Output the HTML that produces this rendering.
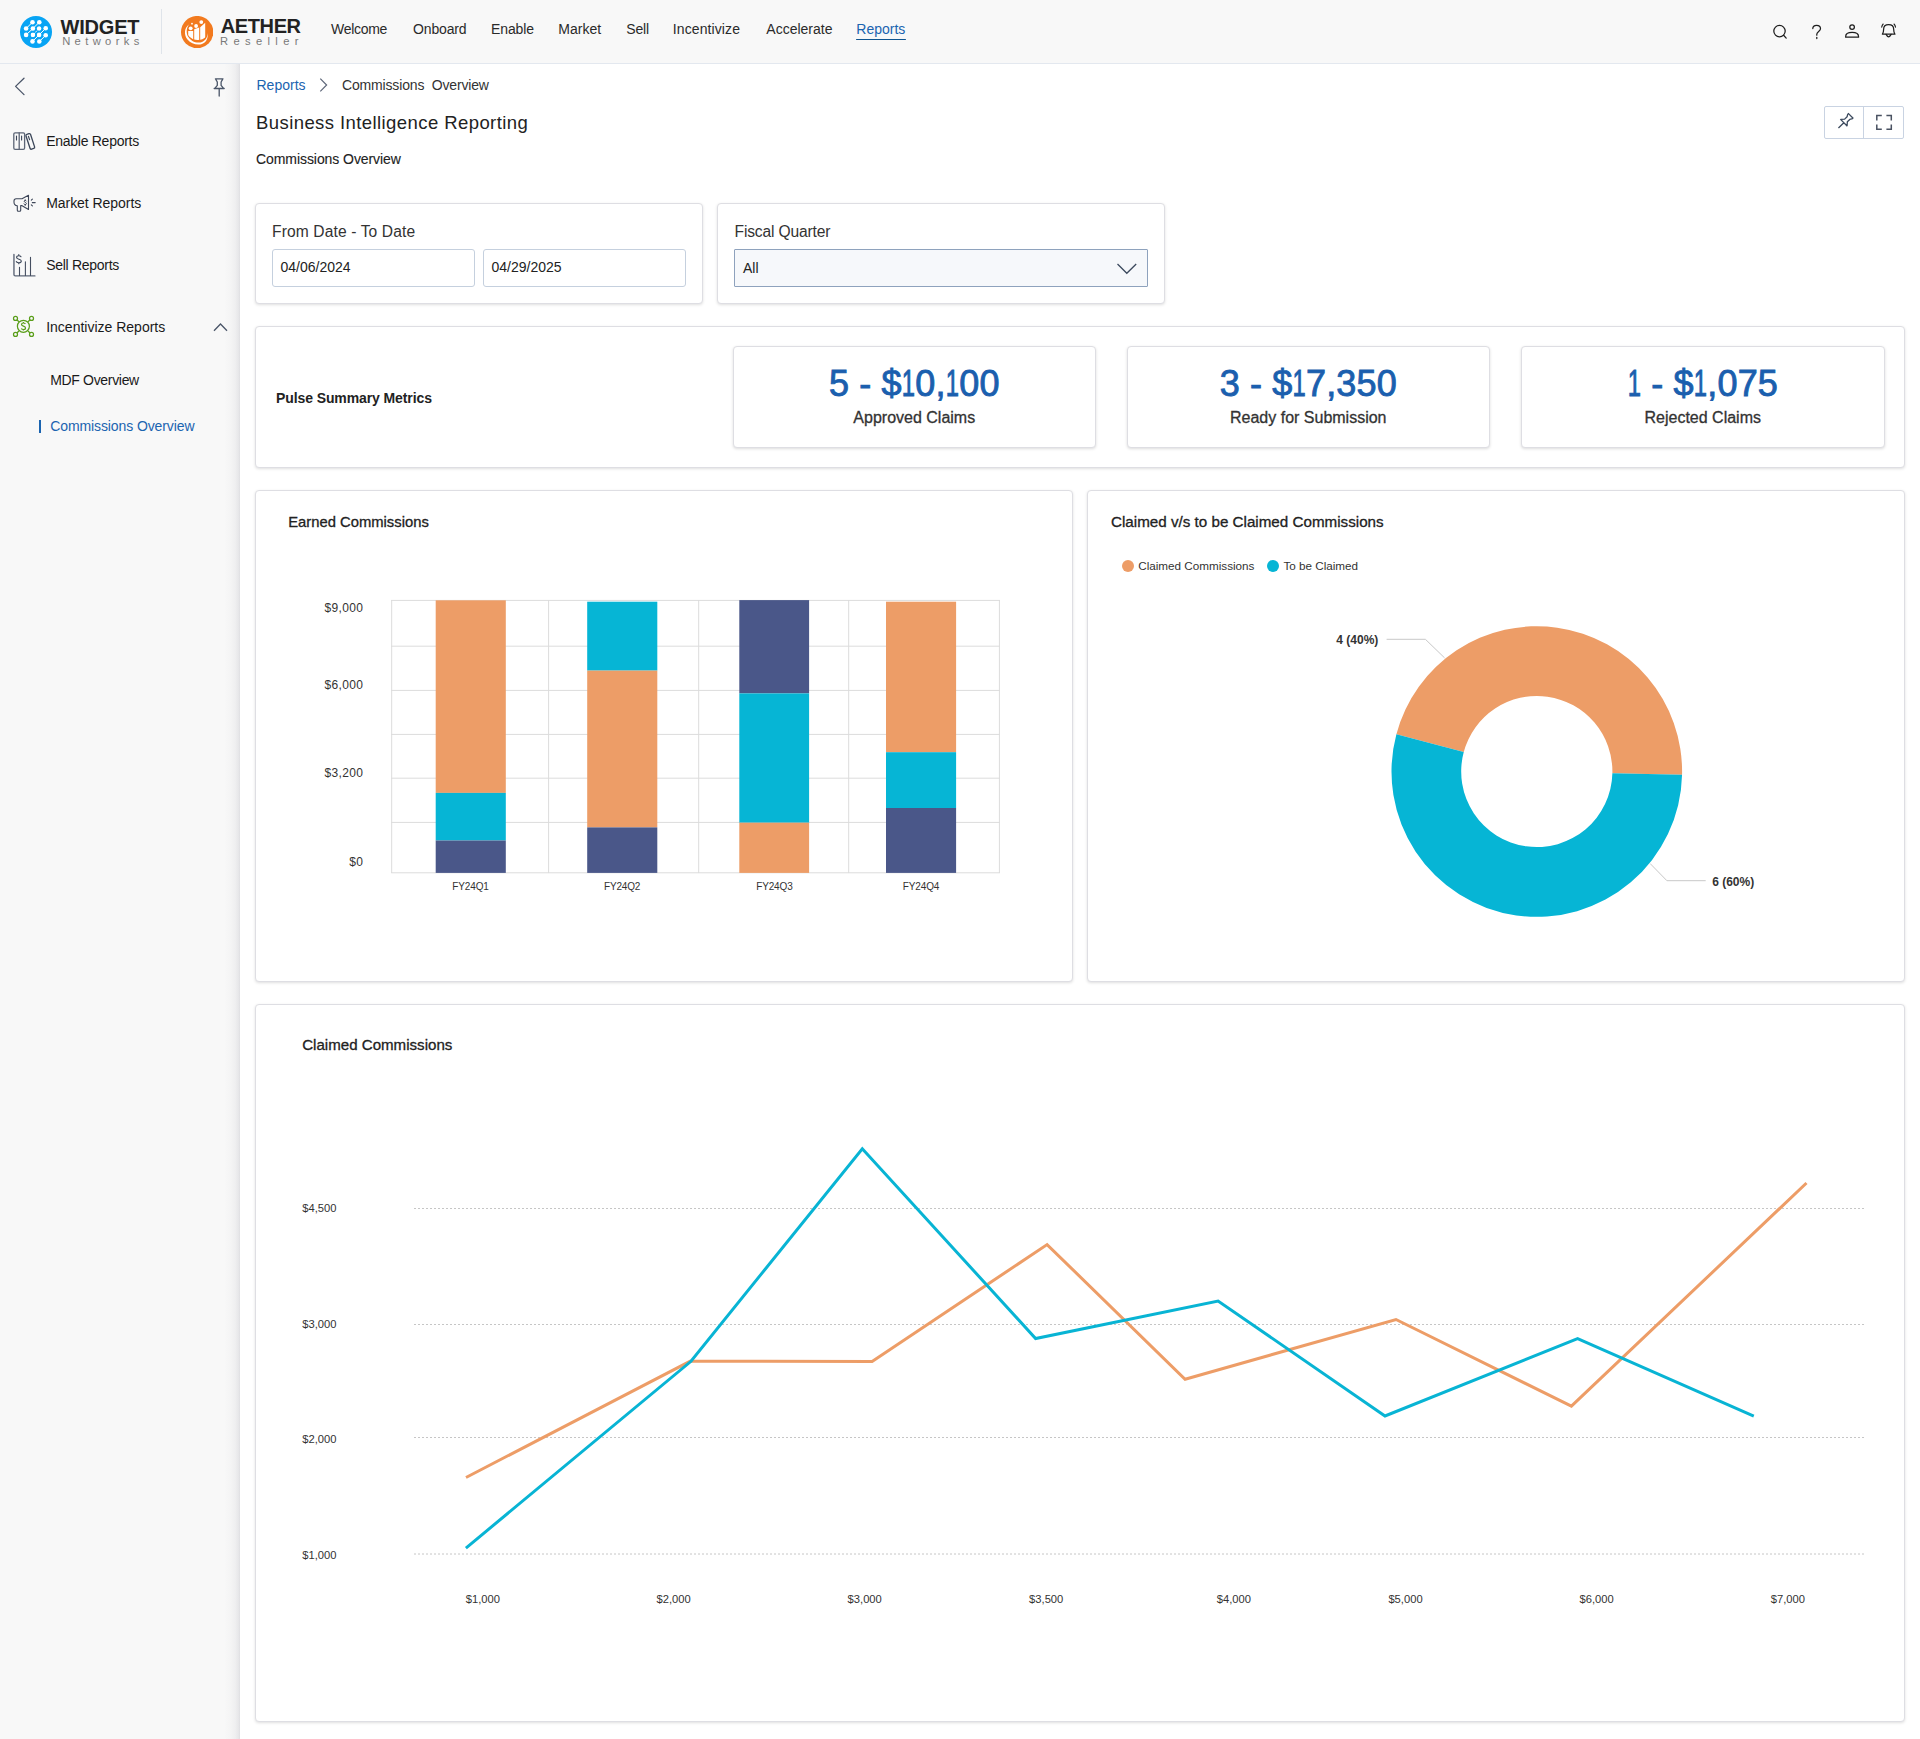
<!DOCTYPE html>
<html><head><meta charset="utf-8"><title>Commissions Overview</title>
<style>
html,body{margin:0;padding:0;}
body{width:1920px;height:1739px;position:relative;overflow:hidden;background:#fff;font-family:"Liberation Sans", sans-serif;}
.t{position:absolute;white-space:nowrap;}
.n1{display:inline-block;width:13.6px;transform:scaleX(0.66);transform-origin:0 0;}
</style></head><body>
<div style="position:absolute;left:0px;top:0px;width:1920px;height:63px;background:#f8f8f8;"></div>
<div style="position:absolute;left:0px;top:63px;width:1920px;height:1px;background:#e3e8ef;"></div>
<svg style="position:absolute;left:20px;top:16px" width="32" height="32" viewBox="0 0 32 32">
<circle cx="16" cy="16" r="16" fill="#08a4f4"/>
<g fill="#fff">
<circle cx="12.5" cy="6.2" r="2.3"/><circle cx="19.3" cy="6.2" r="2.3"/>
<circle cx="6.1" cy="12.5" r="2.3"/><circle cx="12.9" cy="12.5" r="2.3"/><circle cx="19.1" cy="12.5" r="2.3"/><circle cx="25.7" cy="12.3" r="2.3"/>
<circle cx="6.1" cy="18.9" r="2.3"/><circle cx="12.9" cy="18.9" r="2.3"/><circle cx="19.1" cy="18.9" r="2.3"/><circle cx="25.7" cy="19.3" r="2.3"/>
<circle cx="12.5" cy="25.4" r="2.3"/><circle cx="19.3" cy="25.5" r="2.3"/>
</g>
<g stroke="#fff" stroke-width="1" fill="none">
<path d="M6.1 12.5 L12.5 6.2 M12.9 12.5 L19.3 6.2 M6.1 18.9 L12.9 12.5 M12.9 18.9 L19.1 12.5 M19.1 18.9 L25.7 12.3 M12.5 25.4 L19.1 18.9 M19.3 25.5 L25.7 19.3"/>
</g>
<g stroke="#08a4f4" stroke-width="0.9" fill="none">
<circle cx="12.9" cy="18.9" r="3.1"/><circle cx="19.1" cy="12.5" r="3.1"/>
</g>
</svg>
<div class="t" style="left:60.5px;top:17.00px;font-size:20px;line-height:20px;font-weight:700;color:#222;letter-spacing:-0.2px;">WIDGET</div>
<div class="t" style="left:62.2px;top:36.00px;font-size:11.2px;line-height:11.2px;font-weight:400;color:#7a7a7a;letter-spacing:4.35px;">Networks</div>
<div style="position:absolute;left:160.5px;top:9px;width:1px;height:45px;background:#dfe4ea;"></div>
<svg style="position:absolute;left:180.7px;top:16px" width="32.3" height="32.3" viewBox="0 0 32.3 32.3">
<defs><clipPath id="bc"><circle cx="16.8" cy="12" r="12"/></clipPath></defs>
<circle cx="16.15" cy="16.1" r="16.15" fill="#f27a1f"/>
<g fill="#fff">
<path d="M8.3 8.2 C3 11.5 2.8 19 6.5 23.5 C10 28 16.5 29.5 21 28 C25 26.6 27 23 26.9 17 C26.3 22 24 25.5 19.5 26.4 C14.5 27.3 9.5 24.8 7 20.5 C5 17 5.3 11.3 8.3 8.2 Z"/>
<g clip-path="url(#bc)">
<path d="M7.2 15 L12.2 15 L12.2 26 L7.2 26 Z"/>
<path d="M13.2 13.3 L18.2 11.5 L18.2 26 L13.2 26 Z"/>
<path d="M19.2 11.2 L24.2 6.7 L24.2 26 L19.2 26 Z"/>
</g>
<circle cx="9.7" cy="12.3" r="1.9"/><circle cx="15.1" cy="10" r="1.9"/><circle cx="20.3" cy="6.1" r="1.9"/><circle cx="11" cy="7.7" r="0.9"/>
</g></svg>
<div class="t" style="left:220.8px;top:16.00px;font-size:20px;line-height:20px;font-weight:700;color:#222;letter-spacing:-0.4px;">AETHER</div>
<div class="t" style="left:220px;top:36.00px;font-size:11.2px;line-height:11.2px;font-weight:400;color:#7a7a7a;letter-spacing:5.35px;">Reseller</div>
<div class="t" style="left:331px;top:22.00px;font-size:14px;line-height:14px;font-weight:400;color:#2a2a2a;letter-spacing:-0.3px;">Welcome</div>
<div class="t" style="left:413px;top:22.00px;font-size:14px;line-height:14px;font-weight:400;color:#2a2a2a;letter-spacing:-0.15px;">Onboard</div>
<div class="t" style="left:491px;top:22.00px;font-size:14px;line-height:14px;font-weight:400;color:#2a2a2a;letter-spacing:-0.1px;">Enable</div>
<div class="t" style="left:558.3px;top:22.00px;font-size:14px;line-height:14px;font-weight:400;color:#2a2a2a;">Market</div>
<div class="t" style="left:626.3px;top:22.00px;font-size:14px;line-height:14px;font-weight:400;color:#2a2a2a;letter-spacing:-0.15px;">Sell</div>
<div class="t" style="left:672.8px;top:22.00px;font-size:14px;line-height:14px;font-weight:400;color:#2a2a2a;letter-spacing:0.1px;">Incentivize</div>
<div class="t" style="left:766.3px;top:22.00px;font-size:14px;line-height:14px;font-weight:400;color:#2a2a2a;">Accelerate</div>
<div class="t" style="left:856.3px;top:22.00px;font-size:14px;line-height:14px;font-weight:400;color:#1b64b0;">Reports</div>
<div style="position:absolute;left:856.3px;top:38.6px;width:49.5px;height:1.6px;background:#0f548f;border-radius:1px;"></div>
<svg style="position:absolute;left:1766px;top:18px" width="140" height="28" viewBox="1766 18 140 28" fill="none" stroke="#1e1e1e" stroke-width="1.25" stroke-linecap="round">
<circle cx="1779.5" cy="31.1" r="5.7"/><path d="M1783.6 35.3 L1786.2 38.1"/>
<path d="M1812.8 28.6 C1812.8 26.3 1814.6 25.3 1816.6 25.3 C1818.8 25.3 1820.5 26.6 1820.5 28.7 C1820.5 31.3 1816.8 31.6 1816.8 34.2 L1816.8 35.2"/><path d="M1816.8 37.4 L1816.8 38.6"/>
<circle cx="1852.1" cy="27.1" r="2.3"/><path d="M1845.7 37.2 L1858.5 37.2 L1858.5 36.3 C1858.5 33.8 1855.8 32.3 1852.1 32.3 C1848.4 32.3 1845.7 33.8 1845.7 36.3 Z"/>
<path stroke-linejoin="round" d="M1882.4 34.2 L1894.9 34.2 C1894 33 1893.7 31.5 1893.7 29.5 C1893.7 26.6 1891.6 24.7 1888.6 24.7 C1885.6 24.7 1883.6 26.6 1883.6 29.5 C1883.6 31.5 1883.3 33 1882.4 34.2 Z"/>
<path d="M1886.1 34.4 Q1888.6 39.2 1891.1 34.4"/>
<path d="M1881.7 27.2 C1881.9 25.8 1882.4 24.7 1883.2 24" stroke-width="1.1"/><path d="M1895.5 27.2 C1895.3 25.8 1894.8 24.7 1894 24" stroke-width="1.1"/>
</svg>
<div style="position:absolute;left:0px;top:64px;width:240px;height:1675px;background:#f8f8f8;"></div>
<div style="position:absolute;left:224px;top:64px;width:16px;height:1675px;background:linear-gradient(to right, rgba(20,20,50,0) 0%, rgba(20,20,50,0.015) 40%, rgba(20,20,50,0.04) 70%, rgba(20,20,50,0.075) 90%, rgba(20,20,50,0.11) 100%);"></div>
<svg style="position:absolute;left:0;top:64px" width="240" height="400" viewBox="0 64 240 400" fill="none" stroke="#4a5568" stroke-width="1.3" stroke-linecap="round" stroke-linejoin="round">
<path d="M24 78.3 L15.6 86.4 L24 94.6"/>
<path transform="translate(219.2 87.4)" d="M-3.8 -8.6 L3.8 -8.6 M-3.4 -8 L-1.9 -5.4 L-1.9 -2 L-4.4 0.9 M3.4 -8 L1.9 -5.4 L1.9 -2 L4.4 0.9 M-5 1.1 L5 1.1 M0 1.1 L0 8.7"/>
<g stroke="#5d6677" stroke-width="1.3">
<rect x="13.8" y="132.8" width="10.8" height="16.6" rx="1.3"/><path d="M19.2 132.8 L19.2 149.4"/>
<path d="M16.5 136 L16.5 140 M21.6 136 L21.6 140" stroke="#3a4558" stroke-width="1.1"/>
<rect transform="translate(30.3 141.4) rotate(-18)" x="-2.4" y="-7.8" width="4.8" height="15.6" rx="1.3" stroke="#3a4558"/>
<path d="M28.4 136.3 L29.6 139.8" stroke="#3a4558" stroke-width="1.1"/>
</g>
<g stroke="#3d4658" stroke-width="1.1">
<path d="M28.5 195.3 L28.5 209.5 L21.7 205.5 L20.7 205.6 L20.7 210.3 Q20.7 211.3 19.7 211.3 L18.3 211.3 Q17.3 211.3 17.3 210.3 L17.3 205.8 Q14 205.2 14 202.2 L14 201 Q14 198.8 16.2 198.8 L22 198.8 Z"/>
<path d="M31.3 200.2 L32.4 199.2 M32.3 202.6 L35.2 202.6 M31.3 204.8 L32.4 205.9"/>
<path d="M26.3 201 C26 200.6 25.7 200.4 25.2 200.4 C24.6 200.4 24.2 200.8 24.2 201.3 C24.2 202.4 26.4 202.2 26.4 203.6 C26.4 204.2 25.9 204.6 25.2 204.6 C24.6 204.6 24.2 204.3 24 203.9 M25.2 199.8 L25.2 200.4 M25.2 204.6 L25.2 205.4" stroke-width="1"/>
</g>
<g stroke="#5d6677">
<path d="M13.95 254.5 L13.95 274.5 Q13.95 275.9 15.3 275.9 L34.9 275.9" stroke-width="1.4"/>
<path d="M19.5 267.2 L19.5 275.5 M25.4 261.7 L25.4 275.5 M30.5 257.2 L30.5 275.5" stroke="#454e60" stroke-width="1.1"/>
<path d="M21 256.7 C20.6 256 20 255.7 18.8 255.7 C17.6 255.7 16.6 256.3 16.6 257.4 C16.6 259.6 21.3 258.8 21.3 261 C21.3 262.1 20.3 262.8 18.8 262.8 C17.6 262.8 16.8 262.3 16.3 261.6 M18.8 254.6 L18.8 255.7 M18.8 262.8 L18.8 263.8" stroke="#3a4558" stroke-width="1.1"/>
</g>
</svg>
<svg style="position:absolute;left:0;top:300px" width="60" height="50" viewBox="0 300 60 50" fill="none" stroke="#5a9e1a" stroke-width="1.25">
<circle cx="23.4" cy="326.3" r="6.0"/>
<circle cx="15.5" cy="318.4" r="2"/><circle cx="31.5" cy="318.4" r="2"/><circle cx="15.5" cy="334.4" r="2"/><circle cx="31.5" cy="334.4" r="2"/>
<path d="M16.9 319.8 L18.9 321.8 M30.1 319.8 L28 321.8 M16.9 333 L18.9 331 M30.1 333 L28 331"/>
<path d="M25.4 323.9 C25 323.3 24.3 323 23.4 323 C22.3 323 21.5 323.6 21.5 324.5 C21.5 326.5 25.5 325.7 25.5 327.9 C25.5 328.9 24.6 329.5 23.4 329.5 C22.3 329.5 21.6 329.1 21.3 328.5 M23.4 322 L23.4 323 M23.4 329.5 L23.4 330.6" stroke-width="1.2"/>
</svg>
<div class="t" style="left:46.2px;top:134.00px;font-size:14px;line-height:14px;font-weight:400;color:#1a1a1a;letter-spacing:-0.27px;">Enable Reports</div>
<div class="t" style="left:46.2px;top:196.00px;font-size:14px;line-height:14px;font-weight:400;color:#1a1a1a;letter-spacing:-0.05px;">Market Reports</div>
<div class="t" style="left:46.2px;top:258.00px;font-size:14px;line-height:14px;font-weight:400;color:#1a1a1a;letter-spacing:-0.28px;">Sell Reports</div>
<div class="t" style="left:46.2px;top:320.00px;font-size:14px;line-height:14px;font-weight:400;color:#1a1a1a;">Incentivize Reports</div>
<svg style="position:absolute;left:210px;top:318px" width="20" height="16" viewBox="210 318 20 16" fill="none" stroke="#4a5568" stroke-width="1.3"><path d="M214 330.8 L220.5 324 L227 330.8"/></svg>
<div class="t" style="left:50.2px;top:373.00px;font-size:14px;line-height:14px;font-weight:400;color:#1a1a1a;letter-spacing:-0.32px;">MDF Overview</div>
<div style="position:absolute;left:39px;top:420px;width:2.2px;height:13px;background:#1b64b0;"></div>
<div class="t" style="left:50.2px;top:419.00px;font-size:14px;line-height:14px;font-weight:400;color:#1b64b0;letter-spacing:-0.1px;">Commissions Overview</div>
<div class="t" style="left:256.5px;top:78.00px;font-size:14px;line-height:14px;font-weight:400;color:#1b64b0;">Reports</div>
<svg style="position:absolute;left:315px;top:74px" width="16" height="20" viewBox="315 74 16 20" fill="none" stroke="#5d6678" stroke-width="1.2"><path d="M320.3 78.7 L326.6 85 L320.3 91.3"/></svg>
<div class="t" style="left:342px;top:78.00px;font-size:14px;line-height:14px;font-weight:400;color:#333;letter-spacing:-0.16px;">Commissions&nbsp; Overview</div>
<div class="t" style="left:256px;top:114.00px;font-size:18.5px;line-height:18.5px;font-weight:400;color:#222;letter-spacing:0.42px;">Business Intelligence Reporting</div>
<div class="t" style="left:256px;top:152.00px;font-size:14px;line-height:14px;font-weight:400;color:#222;letter-spacing:-0.07px;-webkit-text-stroke:0.12px #222;">Commissions Overview</div>
<div style="position:absolute;left:1824px;top:106px;width:79.5px;height:32.5px;border:1px solid #c9d3e2;box-sizing:border-box;border-radius:2px;background:#fff;"></div>
<div style="position:absolute;left:1863px;top:106px;width:1px;height:32.5px;background:#c9d3e2;"></div>
<svg style="position:absolute;left:1830px;top:108px" width="70" height="28" viewBox="1830 108 70 28" fill="none" stroke="#3c4a5e" stroke-width="1.2">
<path stroke-width="1.3" stroke-linejoin="round" transform="translate(1844.6 121.9) rotate(45)" d="M-3.8 -8.6 L3.8 -8.6 M-3.4 -8 L-1.9 -5.4 L-1.9 -2 L-4.4 0.9 M3.4 -8 L1.9 -5.4 L1.9 -2 L4.4 0.9 M-5 1.1 L5 1.1 M0 1.1 L0 8.7"/>
<path stroke="#4a5262" stroke-width="1.5" d="M1876.8 120.4 L1876.8 115.5 L1881.8 115.5 M1886.4 115.5 L1891.3 115.5 L1891.3 120.4 M1891.3 124.4 L1891.3 129.3 L1886.4 129.3 M1881.8 129.3 L1876.8 129.3 L1876.8 124.4"/>
</svg>
<div style="position:absolute;left:255px;top:203px;width:448px;height:101px;background:#fff;border:1px solid #dedee3;border-radius:4px;box-sizing:border-box;box-shadow:0 1px 3px rgba(0,0,0,0.13);"></div>
<div class="t" style="left:272px;top:224.00px;font-size:15.6px;line-height:15.6px;font-weight:400;color:#333;letter-spacing:0.12px;">From Date - To Date</div>
<div style="position:absolute;left:272px;top:249px;width:202.5px;height:37.5px;border:1px solid #c5d0de;border-radius:3px;box-sizing:border-box;background:#fff;"></div>
<div style="position:absolute;left:483px;top:249px;width:202.5px;height:37.5px;border:1px solid #c5d0de;border-radius:3px;box-sizing:border-box;background:#fff;"></div>
<div class="t" style="left:280.5px;top:260.00px;font-size:14px;line-height:14px;font-weight:400;color:#222;">04/06/2024</div>
<div class="t" style="left:491.5px;top:260.00px;font-size:14px;line-height:14px;font-weight:400;color:#222;">04/29/2025</div>
<div style="position:absolute;left:717px;top:203px;width:448px;height:101px;background:#fff;border:1px solid #dedee3;border-radius:4px;box-sizing:border-box;box-shadow:0 1px 3px rgba(0,0,0,0.13);"></div>
<div class="t" style="left:734.5px;top:224.00px;font-size:15.6px;line-height:15.6px;font-weight:400;color:#333;letter-spacing:-0.15px;">Fiscal Quarter</div>
<div style="position:absolute;left:734px;top:249px;width:414px;height:37.5px;border:1px solid #8ea2bd;box-sizing:border-box;background:#f6f8fb;border-radius:1px;"></div>
<div class="t" style="left:743px;top:261.00px;font-size:14px;line-height:14px;font-weight:400;color:#222;">All</div>
<svg style="position:absolute;left:1112px;top:258px" width="30" height="20" viewBox="1112 258 30 20" fill="none" stroke="#3c4a5e" stroke-width="1.3"><path d="M1117.5 264 L1126.8 273.3 L1136.2 264"/></svg>
<div style="position:absolute;left:255px;top:326px;width:1650px;height:142px;background:#fff;border:1px solid #dedee3;border-radius:4px;box-sizing:border-box;box-shadow:0 1px 3px rgba(0,0,0,0.13);"></div>
<div class="t" style="left:276px;top:391.00px;font-size:14px;line-height:14px;font-weight:700;color:#222;letter-spacing:-0.1px;">Pulse Summary Metrics</div>
<div style="position:absolute;left:733px;top:346px;width:362.5px;height:101.5px;background:#fff;border:1px solid #dedee3;border-radius:4px;box-sizing:border-box;box-shadow:0 1px 3px rgba(0,0,0,0.14);"></div>
<div class="t" style="left:914.25px;top:366.00px;font-size:36px;line-height:36px;font-weight:400;color:#1b5fae;letter-spacing:0.15px;transform:translateX(-50%);-webkit-text-stroke:0.9px #1b5fae;">5 - $<span class="n1">1</span>0,<span class="n1">1</span>00</div>
<div class="t" style="left:914.25px;top:410.00px;font-size:16px;line-height:16px;font-weight:400;color:#333;transform:translateX(-50%);-webkit-text-stroke:0.3px #333;">Approved Claims</div>
<div style="position:absolute;left:1126.5px;top:346px;width:363.5px;height:101.5px;background:#fff;border:1px solid #dedee3;border-radius:4px;box-sizing:border-box;box-shadow:0 1px 3px rgba(0,0,0,0.14);"></div>
<div class="t" style="left:1308.25px;top:366.00px;font-size:36px;line-height:36px;font-weight:400;color:#1b5fae;letter-spacing:0.15px;transform:translateX(-50%);-webkit-text-stroke:0.9px #1b5fae;">3 - $<span class="n1">1</span>7,350</div>
<div class="t" style="left:1308.25px;top:410.00px;font-size:16px;line-height:16px;font-weight:400;color:#333;transform:translateX(-50%);-webkit-text-stroke:0.3px #333;">Ready for Submission</div>
<div style="position:absolute;left:1520.8px;top:346px;width:363.9000000000001px;height:101.5px;background:#fff;border:1px solid #dedee3;border-radius:4px;box-sizing:border-box;box-shadow:0 1px 3px rgba(0,0,0,0.14);"></div>
<div class="t" style="left:1702.75px;top:366.00px;font-size:36px;line-height:36px;font-weight:400;color:#1b5fae;letter-spacing:0.15px;transform:translateX(-50%);-webkit-text-stroke:0.9px #1b5fae;"><span class="n1">1</span> - $<span class="n1">1</span>,075</div>
<div class="t" style="left:1702.75px;top:410.00px;font-size:16px;line-height:16px;font-weight:400;color:#333;transform:translateX(-50%);-webkit-text-stroke:0.3px #333;">Rejected Claims</div>
<div style="position:absolute;left:255px;top:490px;width:818px;height:492px;background:#fff;border:1px solid #dedee3;border-radius:4px;box-sizing:border-box;box-shadow:0 1px 3px rgba(0,0,0,0.13);"></div>
<div class="t" style="left:288.2px;top:515.00px;font-size:14.8px;line-height:14.8px;font-weight:400;color:#222;-webkit-text-stroke:0.3px #222;">Earned Commissions</div>
<svg style="position:absolute;left:0;top:0" width="1920" height="1739" viewBox="0 0 1920 1739"><line x1="391.2" y1="600.4" x2="999.9" y2="600.4" stroke="#dcdcdc" stroke-width="1"/><line x1="391.2" y1="646.2" x2="999.9" y2="646.2" stroke="#dcdcdc" stroke-width="1"/><line x1="391.2" y1="690.4" x2="999.9" y2="690.4" stroke="#dcdcdc" stroke-width="1"/><line x1="391.2" y1="734.4" x2="999.9" y2="734.4" stroke="#dcdcdc" stroke-width="1"/><line x1="391.2" y1="778.2" x2="999.9" y2="778.2" stroke="#dcdcdc" stroke-width="1"/><line x1="391.2" y1="822.4" x2="999.9" y2="822.4" stroke="#dcdcdc" stroke-width="1"/><line x1="391.2" y1="872.8" x2="999.9" y2="872.8" stroke="#dcdcdc" stroke-width="1"/><line x1="391.7" y1="600" x2="391.7" y2="873" stroke="#dcdcdc" stroke-width="1"/><line x1="548.6" y1="600" x2="548.6" y2="873" stroke="#dcdcdc" stroke-width="1"/><line x1="698.7" y1="600" x2="698.7" y2="873" stroke="#dcdcdc" stroke-width="1"/><line x1="848.7" y1="600" x2="848.7" y2="873" stroke="#dcdcdc" stroke-width="1"/><line x1="999.4" y1="600" x2="999.4" y2="873" stroke="#dcdcdc" stroke-width="1"/><rect x="435.7" y="600.3" width="70.10000000000002" height="192.60000000000002" fill="#ed9d67"/><rect x="435.7" y="792.9" width="70.10000000000002" height="47.60000000000002" fill="#06b5d5"/><rect x="435.7" y="840.5" width="70.10000000000002" height="32.39999999999998" fill="#4a5789"/><rect x="587.2" y="601.7" width="70.09999999999991" height="68.89999999999998" fill="#06b5d5"/><rect x="587.2" y="670.6" width="70.09999999999991" height="156.79999999999995" fill="#ed9d67"/><rect x="587.2" y="827.4" width="70.09999999999991" height="45.5" fill="#4a5789"/><rect x="739.3" y="600.1" width="69.80000000000007" height="93.29999999999995" fill="#4a5789"/><rect x="739.3" y="693.4" width="69.80000000000007" height="129.30000000000007" fill="#06b5d5"/><rect x="739.3" y="822.7" width="69.80000000000007" height="50.19999999999993" fill="#ed9d67"/><rect x="886" y="601.7" width="70.10000000000002" height="150.5" fill="#ed9d67"/><rect x="886" y="752.2" width="70.10000000000002" height="55.799999999999955" fill="#06b5d5"/><rect x="886" y="808" width="70.10000000000002" height="64.89999999999998" fill="#4a5789"/></svg>
<div class="t" style="left:363.3px;top:602.00px;font-size:12px;line-height:12px;font-weight:400;color:#333;letter-spacing:0.35px;transform:translateX(-100%);">$9,000</div>
<div class="t" style="left:363.3px;top:679.00px;font-size:12px;line-height:12px;font-weight:400;color:#333;letter-spacing:0.35px;transform:translateX(-100%);">$6,000</div>
<div class="t" style="left:363.3px;top:767.00px;font-size:12px;line-height:12px;font-weight:400;color:#333;letter-spacing:0.35px;transform:translateX(-100%);">$3,200</div>
<div class="t" style="left:363.3px;top:856.00px;font-size:12px;line-height:12px;font-weight:400;color:#333;letter-spacing:0.35px;transform:translateX(-100%);">$0</div>
<div class="t" style="left:470.5px;top:882.00px;font-size:10px;line-height:10px;font-weight:400;color:#333;letter-spacing:-0.15px;transform:translateX(-50%);">FY24Q1</div>
<div class="t" style="left:622.1px;top:882.00px;font-size:10px;line-height:10px;font-weight:400;color:#333;letter-spacing:-0.15px;transform:translateX(-50%);">FY24Q2</div>
<div class="t" style="left:774.4px;top:882.00px;font-size:10px;line-height:10px;font-weight:400;color:#333;letter-spacing:-0.15px;transform:translateX(-50%);">FY24Q3</div>
<div class="t" style="left:921px;top:882.00px;font-size:10px;line-height:10px;font-weight:400;color:#333;letter-spacing:-0.15px;transform:translateX(-50%);">FY24Q4</div>
<div style="position:absolute;left:1087px;top:490px;width:818px;height:492px;background:#fff;border:1px solid #dedee3;border-radius:4px;box-sizing:border-box;box-shadow:0 1px 3px rgba(0,0,0,0.13);"></div>
<div class="t" style="left:1111px;top:514.00px;font-size:15.2px;line-height:15.2px;font-weight:400;color:#222;-webkit-text-stroke:0.3px #222;">Claimed v/s to be Claimed Commissions</div>
<div style="position:absolute;left:1122px;top:560.2px;width:12px;height:12px;background:#ed9d67;border-radius:50%;"></div>
<div class="t" style="left:1138.2px;top:560.00px;font-size:11.7px;line-height:11.7px;font-weight:400;color:#333;">Claimed Commissions</div>
<div style="position:absolute;left:1267px;top:560.2px;width:12px;height:12px;background:#06b5d5;border-radius:50%;"></div>
<div class="t" style="left:1283.4px;top:560.00px;font-size:11.7px;line-height:11.7px;font-weight:400;color:#333;">To be Claimed</div>
<svg style="position:absolute;left:0;top:0" width="1920" height="1739" viewBox="0 0 1920 1739"><path d="M1682.06 774.80 A145.3 145.3 0 0 0 1396.39 734.14 L1463.74 752.06 A75.6 75.6 0 0 1 1612.38 773.22 Z" fill="#ed9d67"/><path d="M1396.39 734.14 A145.3 145.3 0 1 0 1682.06 774.80 L1612.38 773.22 A75.6 75.6 0 1 1 1463.74 752.06 Z" fill="#06b5d5"/><path d="M1386.6 639.3 L1425.4 639.3 L1444.6 657.9" fill="none" stroke="#c8c8c8" stroke-width="1"/><path d="M1650.1 863.5 L1666.9 880.7 L1705.7 880.7" fill="none" stroke="#c8c8c8" stroke-width="1"/></svg>
<div class="t" style="left:1336.3px;top:634.00px;font-size:12px;line-height:12px;font-weight:700;color:#333;">4 (40%)</div>
<div class="t" style="left:1712.2px;top:876.00px;font-size:12px;line-height:12px;font-weight:700;color:#333;">6 (60%)</div>
<div style="position:absolute;left:255px;top:1004px;width:1650px;height:718px;background:#fff;border:1px solid #dedee3;border-radius:4px;box-sizing:border-box;box-shadow:0 1px 3px rgba(0,0,0,0.13);"></div>
<div class="t" style="left:302.2px;top:1037.00px;font-size:15.1px;line-height:15.1px;font-weight:400;color:#222;-webkit-text-stroke:0.3px #222;">Claimed Commissions</div>
<svg style="position:absolute;left:0;top:0" width="1920" height="1739" viewBox="0 0 1920 1739"><line x1="414" y1="1208.5" x2="1866" y2="1208.5" stroke="#c6c6c6" stroke-width="1" stroke-dasharray="2 2"/><line x1="414" y1="1324.5" x2="1866" y2="1324.5" stroke="#c6c6c6" stroke-width="1" stroke-dasharray="2 2"/><line x1="414" y1="1437.5" x2="1866" y2="1437.5" stroke="#c6c6c6" stroke-width="1" stroke-dasharray="2 2"/><line x1="414" y1="1554" x2="1866" y2="1554" stroke="#c6c6c6" stroke-width="1" stroke-dasharray="2 2"/><polyline fill="none" stroke="#ed9d67" stroke-width="3" points="466,1477.5 690,1361.3 872.1,1361.4 1047.1,1244.6 1185.1,1379.2 1396,1319.5 1571.4,1406.2 1806.5,1183"/><polyline fill="none" stroke="#08b4d4" stroke-width="3" points="465.9,1548.1 691,1361.3 862.3,1148.7 1035.6,1338.5 1218.1,1301 1385,1416 1577.6,1338.6 1753.8,1416.2"/></svg>
<div class="t" style="left:302.3px;top:1203.00px;font-size:11.2px;line-height:11.2px;font-weight:400;color:#333;">$4,500</div>
<div class="t" style="left:302.3px;top:1319.00px;font-size:11.2px;line-height:11.2px;font-weight:400;color:#333;">$3,000</div>
<div class="t" style="left:302.3px;top:1434.00px;font-size:11.2px;line-height:11.2px;font-weight:400;color:#333;">$2,000</div>
<div class="t" style="left:302.3px;top:1550.00px;font-size:11.2px;line-height:11.2px;font-weight:400;color:#333;">$1,000</div>
<div class="t" style="left:482.8px;top:1594.00px;font-size:11.2px;line-height:11.2px;font-weight:400;color:#333;transform:translateX(-50%);">$1,000</div>
<div class="t" style="left:673.6px;top:1594.00px;font-size:11.2px;line-height:11.2px;font-weight:400;color:#333;transform:translateX(-50%);">$2,000</div>
<div class="t" style="left:864.7px;top:1594.00px;font-size:11.2px;line-height:11.2px;font-weight:400;color:#333;transform:translateX(-50%);">$3,000</div>
<div class="t" style="left:1046.2px;top:1594.00px;font-size:11.2px;line-height:11.2px;font-weight:400;color:#333;transform:translateX(-50%);">$3,500</div>
<div class="t" style="left:1233.9px;top:1594.00px;font-size:11.2px;line-height:11.2px;font-weight:400;color:#333;transform:translateX(-50%);">$4,000</div>
<div class="t" style="left:1405.5px;top:1594.00px;font-size:11.2px;line-height:11.2px;font-weight:400;color:#333;transform:translateX(-50%);">$5,000</div>
<div class="t" style="left:1596.6px;top:1594.00px;font-size:11.2px;line-height:11.2px;font-weight:400;color:#333;transform:translateX(-50%);">$6,000</div>
<div class="t" style="left:1787.8px;top:1594.00px;font-size:11.2px;line-height:11.2px;font-weight:400;color:#333;transform:translateX(-50%);">$7,000</div>
</body></html>
